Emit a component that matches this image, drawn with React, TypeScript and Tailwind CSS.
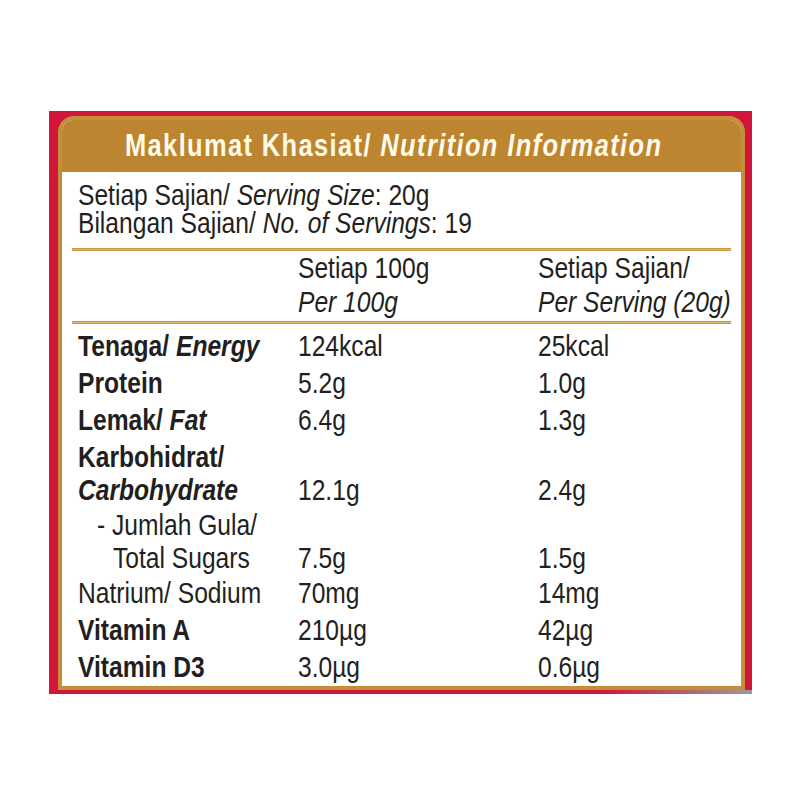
import React from 'react'

type Row = {
  lines: React.ReactNode[]
  per100: string
  perServing: string
  indent?: string[]
}

const rows: Row[] = [
  {
    lines: [<b key="a">Tenaga/ <i>Energy</i></b>],
    per100: '124kcal',
    perServing: '25kcal',
  },
  { lines: [<b key="a">Protein</b>], per100: '5.2g', perServing: '1.0g' },
  {
    lines: [<b key="a">Lemak/ <i>Fat</i></b>],
    per100: '6.4g',
    perServing: '1.3g',
  },
  {
    lines: [<b key="a">Karbohidrat/</b>, <b key="b"><i>Carbohydrate</i></b>],
    per100: '12.1g',
    perServing: '2.4g',
  },
  {
    lines: ['- Jumlah Gula/', 'Total Sugars'],
    indent: ['pl-[19px]', 'pl-[35px]'],
    per100: '7.5g',
    perServing: '1.5g',
  },
  { lines: ['Natrium/ Sodium'], per100: '70mg', perServing: '14mg' },
  { lines: [<b key="a">Vitamin A</b>], per100: '210µg', perServing: '42µg' },
  { lines: [<b key="a">Vitamin D3</b>], per100: '3.0µg', perServing: '0.6µg' },
]

// no narrow face installed, so squeeze Liberation Sans like Arial Narrow
function Narrow({ children }: { children: React.ReactNode }) {
  return <span className="inline-block origin-left scale-x-[0.82] whitespace-nowrap">{children}</span>
}

function GoldRule() {
  return <div className="h-[3px] bg-gradient-to-b from-[#c08a34] via-[#dcb46a] to-[#c08a34]" />
}

function NutritionRow({ row }: { row: Row }) {
  // two-line rows are set a bit tighter, values sit on the last line
  const multi = row.lines.length > 1
  const lh = multi ? 'leading-[33px]' : 'leading-[37px]'
  return (
    <div className={`grid grid-cols-[220px_240px_1fr] pl-[6px] ${lh} ${multi ? 'pt-[2px]' : ''}`}>
      <div className="flex flex-col">
        {row.lines.map((l, i) => (
          <div key={i} className={row.indent ? row.indent[i] : ''}>
            <Narrow>{l}</Narrow>
          </div>
        ))}
      </div>
      <div className="flex flex-col justify-end">
        <Narrow>{row.per100}</Narrow>
      </div>
      <div className="flex flex-col justify-end">
        <Narrow>{row.perServing}</Narrow>
      </div>
    </div>
  )
}

export default function App() {
  return (
    <div className="w-[800px] h-[800px] bg-white pt-[111px] pl-[49px] font-['Liberation_Sans',Arial,sans-serif] text-[#231f20]">
      <div className="relative w-[703px] h-[583px] bg-[#d2163a] pt-[5px] pl-[9px] pr-[7px] pb-[4px] flex">
        <div className="absolute right-0 bottom-0 w-[150px] h-[4px] bg-gradient-to-r from-transparent to-[#9b9b9b]" />
        <div className="relative flex-1 flex flex-col bg-white border-[4px] border-[#c38f3a] rounded-t-[16px] overflow-hidden">
          <div className="h-[52px] bg-[#be8530] pl-[63px] text-[31px] leading-[52px] font-bold tracking-[1.7px] text-[#fffbea]">
            <Narrow>
              Maklumat Khasiat/ <i>Nutrition Information</i>
            </Narrow>
          </div>

          <div className="px-[10px] pt-[9px] text-[30px]">
            <div className="pl-[6px] leading-[28px]">
              <div>
                <Narrow>
                  Setiap Sajian/ <i>Serving Size</i>: 20g
                </Narrow>
              </div>
              <div>
                <Narrow>
                  Bilangan Sajian/ <i>No. of Servings</i>: 19
                </Narrow>
              </div>
            </div>

            <div className="mt-[11px]">
              <GoldRule />
            </div>

            <div className="grid grid-cols-[220px_240px_1fr] pl-[6px] leading-[34px]">
              <div />
              <div>
                <div>
                  <Narrow>Setiap 100g</Narrow>
                </div>
                <div>
                  <Narrow>
                    <i>Per 100g</i>
                  </Narrow>
                </div>
              </div>
              <div>
                <div>
                  <Narrow>Setiap Sajian/</Narrow>
                </div>
                <div>
                  <Narrow>
                    <i>Per Serving (20g)</i>
                  </Narrow>
                </div>
              </div>
            </div>

            <div className="mt-[2px]">
              <GoldRule />
            </div>

            <div className="mt-[3px]">
              {rows.map((r, i) => (
                <NutritionRow key={i} row={r} />
              ))}
            </div>
          </div>
        </div>
      </div>
    </div>
  )
}
